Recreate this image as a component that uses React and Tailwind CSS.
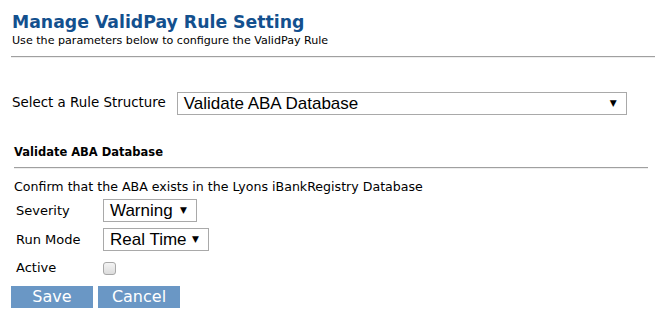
import { useState } from 'react';

const verdana = { fontFamily: '"DejaVu Sans", Verdana, sans-serif' };

function Select({ value, className }) {
  return (
    <div className={`relative border border-[#a9a9a9] bg-white h-[23px] flex items-center ${className}`}>
      <span className="pl-[6px] text-[17px] leading-none text-black" style={{ fontFamily: '"Liberation Sans", Arial, sans-serif' }}>
        {value}
      </span>
      <span className="ml-auto pr-[9px] text-[9px] text-black" style={{ fontFamily: '"DejaVu Sans", sans-serif' }}>▼</span>
    </div>
  );
}

function App() {
  const [active, setActive] = useState(false);

  return (
    <div className="min-h-screen bg-white text-[#222]" style={verdana}>
      <div className="pl-[11px] pt-[11px]">
        {/* Header */}
        <h1 className="pl-[1px] text-[17.3px] font-bold leading-[22px] text-[#13508e]">
          Manage ValidPay Rule Setting
        </h1>
        <p className="pl-[1px] mt-[1px] text-[11.1px] leading-[14px] text-black">
          Use the parameters below to configure the ValidPay Rule
        </p>
        <div className="mt-[8px] border-t border-[#a0a0a0] border-b border-b-[#eeeeee]" />

        {/* Rule structure */}
        <div className="mt-[34px] flex items-center pl-[1px]">
          <span className="text-[13.4px] text-black">Select a Rule Structure</span>
          <Select value="Validate ABA Database" className="ml-[11px] w-[450px]" />
        </div>

        {/* Rule details */}
        <div className="mt-[29px] pl-[3px] pr-[7px]">
          <h2 className="text-[11.5px] font-bold leading-[16px] text-black">Validate ABA Database</h2>
          <div className="mt-[7px] border-t border-[#a0a0a0] border-b border-b-[#eeeeee]" />
          <p className="mt-[10px] text-[12.6px] leading-[16px] text-black">
            Confirm that the ABA exists in the Lyons iBankRegistry Database
          </p>
          <div className="mt-[4px] grid grid-cols-[89px_auto] gap-y-[6px] items-center text-[13px] text-black">
            <span className="pl-[2px]">Severity</span>
            <Select value="Warning" className="w-[94px]" />
            <span className="pl-[2px]">Run Mode</span>
            <Select value="Real Time" className="w-[106px]" />
            <span className="pl-[2px] h-[22px] flex items-center">Active</span>
            <div className="h-[22px] flex items-center">
              <button
                onClick={() => setActive(!active)}
                className="w-[13px] h-[13px] rounded-[3px] border border-[#a8a8a8] bg-gradient-to-b from-[#f4f4f4] to-[#dcdcdc] flex items-center justify-center text-[10px]"
              >
                {active ? '✓' : ''}
              </button>
            </div>
          </div>
        </div>

        {/* Actions */}
        <div className="mt-[7px] flex gap-[5px]">
          <button className="w-[82px] h-[22px] bg-[#6a97c5] text-white text-[16px] leading-none">Save</button>
          <button className="w-[82px] h-[22px] bg-[#6a97c5] text-white text-[16px] leading-none">Cancel</button>
        </div>
      </div>
    </div>
  );
}

export default App;
